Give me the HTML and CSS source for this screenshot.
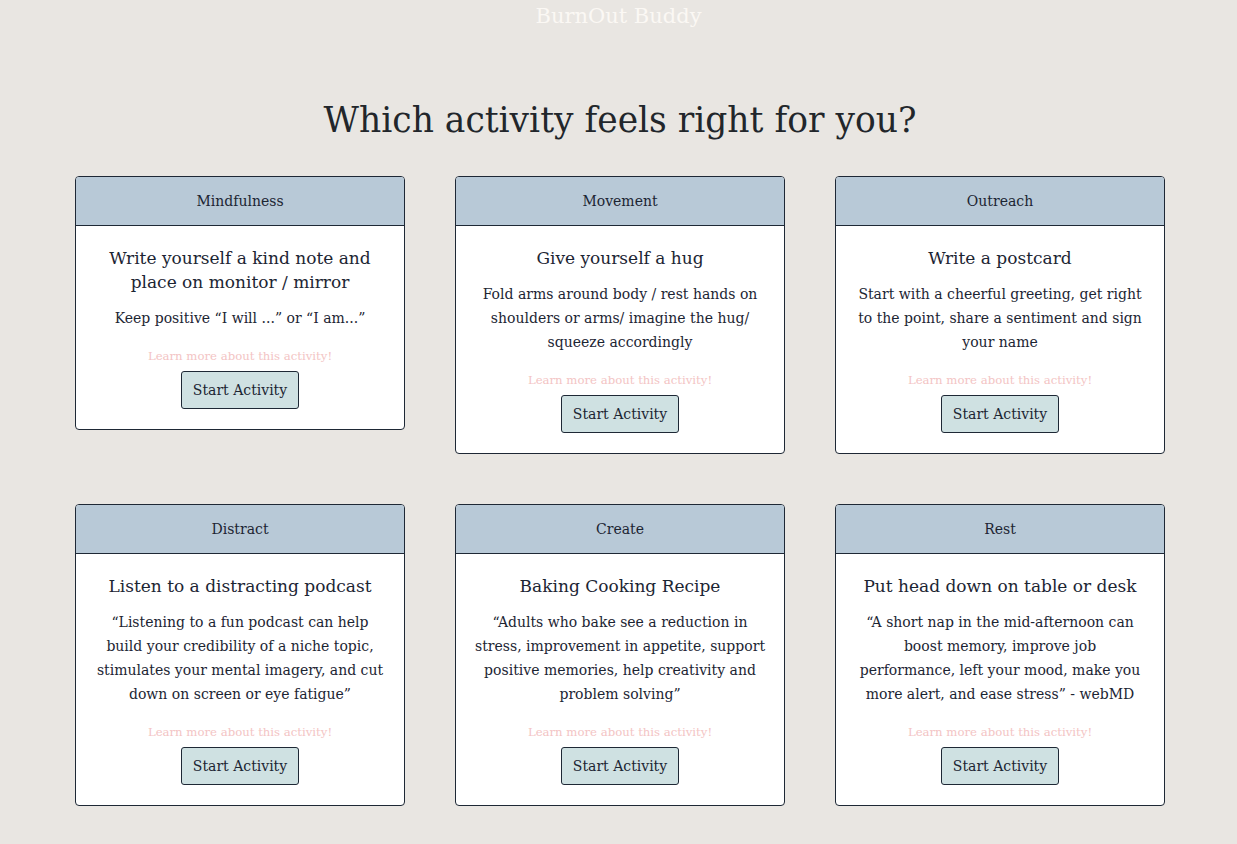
FILE: index.html
```html
<!DOCTYPE html>
<html lang="en">
<head>
<meta charset="utf-8">
<title>BurnOut Buddy</title>
<link rel="stylesheet" href="styles.css">
</head>
<body>
<header class="top">BurnOut Buddy</header>
<main class="page">
  <h1 class="heading">Which activity feels right for you?</h1>
  <div class="grid">
    <section class="card">
      <div class="card-head">Mindfulness</div>
      <div class="card-body">
        <h2 class="card-title">Write yourself a kind note and place on monitor / mirror</h2>
        <p class="card-text">Keep positive “I will ...” or “I am...”</p>
        <a class="learn" href="#">Learn more about this activity!</a>
        <button class="start">Start Activity</button>
      </div>
    </section>
    <section class="card">
      <div class="card-head">Movement</div>
      <div class="card-body">
        <h2 class="card-title">Give yourself a hug</h2>
        <p class="card-text">Fold arms around body / rest hands on shoulders or arms/ imagine the hug/ squeeze accordingly</p>
        <a class="learn" href="#">Learn more about this activity!</a>
        <button class="start">Start Activity</button>
      </div>
    </section>
    <section class="card">
      <div class="card-head">Outreach</div>
      <div class="card-body">
        <h2 class="card-title">Write a postcard</h2>
        <p class="card-text">Start with a cheerful greeting, get right to the point, share a sentiment and sign your name</p>
        <a class="learn" href="#">Learn more about this activity!</a>
        <button class="start">Start Activity</button>
      </div>
    </section>
    <section class="card">
      <div class="card-head">Distract</div>
      <div class="card-body">
        <h2 class="card-title">Listen to a distracting podcast</h2>
        <p class="card-text">“Listening to a fun podcast can help build your credibility of a niche topic, stimulates your mental imagery, and cut down on screen or eye fatigue”</p>
        <a class="learn" href="#">Learn more about this activity!</a>
        <button class="start">Start Activity</button>
      </div>
    </section>
    <section class="card">
      <div class="card-head">Create</div>
      <div class="card-body">
        <h2 class="card-title">Baking Cooking Recipe</h2>
        <p class="card-text">“Adults who bake see a reduction in stress, improvement in appetite, support positive memories, help creativity and problem solving”</p>
        <a class="learn" href="#">Learn more about this activity!</a>
        <button class="start">Start Activity</button>
      </div>
    </section>
    <section class="card">
      <div class="card-head">Rest</div>
      <div class="card-body">
        <h2 class="card-title">Put head down on table or desk</h2>
        <p class="card-text">“A short nap in the mid-afternoon can boost memory, improve job performance, left your mood, make you more alert, and ease stress” - webMD</p>
        <a class="learn" href="#">Learn more about this activity!</a>
        <button class="start">Start Activity</button>
      </div>
    </section>
  </div>
</main>
</body>
</html>
```
FILE: styles.css
```css
* { box-sizing: border-box; }
html, body {
  margin: 0;
  padding: 0;
  background: #e9e6e2;
  font-family: "DejaVu Serif", "Liberation Serif", serif;
  color: #1c2533;
}
.top {
  text-align: center;
  color: #fbf8f4;
  font-size: 21px;
  line-height: 32px;
  height: 32px;
}
.page {
  padding: 0 72px 40px 75px;
}
.heading {
  margin: 64px 0 32px;
  text-align: center;
  font-weight: normal;
  font-size: 34.5px;
  line-height: 48px;
  color: #22262b;
}
.grid {
  display: grid;
  grid-template-columns: repeat(3, 330px);
  column-gap: 50px;
  row-gap: 50px;
  align-items: start;
}
.card {
  background: #fff;
  border: 1px solid #1e2835;
  border-radius: 4px;
  overflow: hidden;
}
.card-head {
  background: #b8c9d7;
  border-bottom: 1px solid #1e2835;
  height: 49px;
  display: flex;
  align-items: center;
  justify-content: center;
  font-size: 14px;
}
.card-body {
  padding: 20px 18.5px 20px;
  display: flex;
  flex-direction: column;
  align-items: center;
  text-align: center;
}
.card-title {
  margin: 0;
  font-weight: normal;
  font-size: 17px;
  line-height: 24px;
}
.card-text {
  margin: 12px 0 0;
  font-size: 14px;
  line-height: 24px;
}
.learn {
  margin-top: 18px;
  font-size: 11.7px;
  line-height: 16px;
  color: #f3c4c4;
  text-decoration: none;
}
.start {
  margin-top: 7px;
  height: 38px;
  padding: 0 11px;
  font-family: inherit;
  font-size: 14px;
  color: #1c2533;
  background: #cfe1e2;
  border: 1px solid #1e2835;
  border-radius: 3px;
}
```
